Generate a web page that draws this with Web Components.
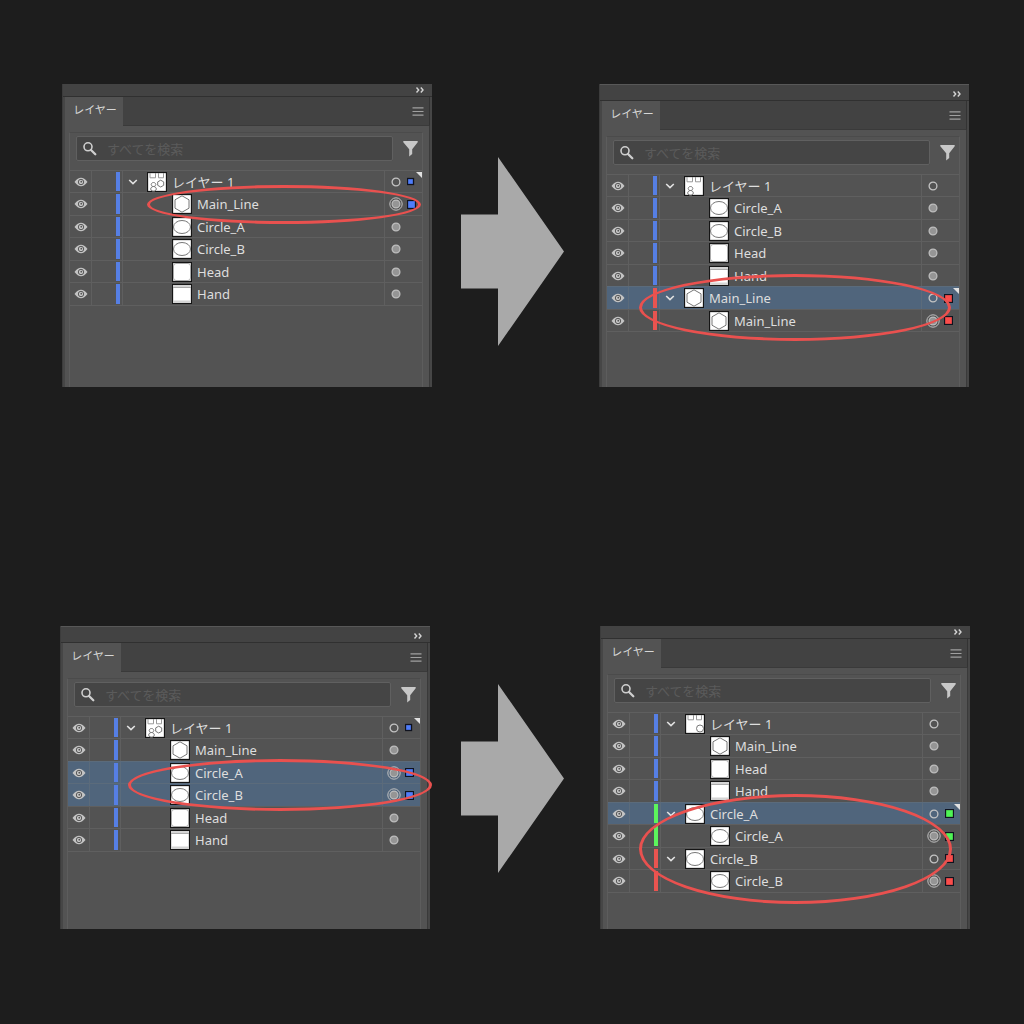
<!DOCTYPE html>
<html lang="ja">
<head>
<meta charset="utf-8">
<title>レイヤー</title>
<style>
  body {
    margin: 0;
    min-height: 100vh;
    background: #1d1d1d;
    color: #dedede;
    font: 13px/20px "Noto Sans", "Noto Sans CJK JP", sans-serif;
  }
  main {
    display: flex;
    flex-direction: column;
    gap: 239px;
    padding: 84px 0;
  }
  .move {
    --lead: 62px;
    --trail: 55px;
    --before: 29px;
    --after: 35px;
    --drop: 73px;
  }
  .copy {
    --lead: 60px;
    --trail: 54px;
    --before: 31px;
    --after: 36px;
    --drop: 58px;
  }
</style>
</head>
<body>
<main>
  <layer-step class="move">
    <layers-panel slot="from">
      <layer-row kind="layer" parts="all" level="0" mark="small" current>レイヤー 1</layer-row>
      <layer-row kind="hex" target="on" mark="large">Main_Line</layer-row>
      <layer-row kind="oval" target="art">Circle_A</layer-row>
      <layer-row kind="oval" target="art">Circle_B</layer-row>
      <layer-row kind="head" target="art">Head</layer-row>
      <layer-row kind="hand" target="art">Hand</layer-row>
      <note-ring slot="note" style="--top: 101px; --left: 84px; --right: 11px; --height: 39px"></note-ring>
    </layers-panel>
    <layers-panel slot="to" tall>
      <layer-row kind="layer" parts="figure" level="0">レイヤー 1</layer-row>
      <layer-row kind="oval" target="art">Circle_A</layer-row>
      <layer-row kind="oval" target="art">Circle_B</layer-row>
      <layer-row kind="head" target="art">Head</layer-row>
      <layer-row kind="hand" target="art">Hand</layer-row>
      <layer-row kind="hex" level="0" color="red" mark="large" selected current>Main_Line</layer-row>
      <layer-row kind="hex" color="red" target="on" mark="large">Main_Line</layer-row>
      <note-ring slot="note" style="--top: 190px; --left: 39px; --right: 18px; --height: 67px"></note-ring>
    </layers-panel>
  </layer-step>

  <layer-step class="copy">
    <layers-panel slot="from" tall>
      <layer-row kind="layer" parts="all" level="0" mark="small" current>レイヤー 1</layer-row>
      <layer-row kind="hex" target="art">Main_Line</layer-row>
      <layer-row kind="oval" target="on" mark="large" selected>Circle_A</layer-row>
      <layer-row kind="oval" target="on" mark="large" selected>Circle_B</layer-row>
      <layer-row kind="head" target="art">Head</layer-row>
      <layer-row kind="hand" target="art">Hand</layer-row>
      <note-ring slot="note" style="--top: 133px; --left: 67px; --right: -2px; --height: 52px"></note-ring>
    </layers-panel>
    <layers-panel slot="to">
      <layer-row kind="layer" parts="hex" level="0">レイヤー 1</layer-row>
      <layer-row kind="hex" target="art">Main_Line</layer-row>
      <layer-row kind="head" target="art">Head</layer-row>
      <layer-row kind="hand" target="art">Hand</layer-row>
      <layer-row kind="oval" level="0" color="green" mark="large" selected current>Circle_A</layer-row>
      <layer-row kind="oval" color="green" target="on" mark="large">Circle_A</layer-row>
      <layer-row kind="oval" level="0" color="red" mark="large">Circle_B</layer-row>
      <layer-row kind="oval" color="red" target="on" mark="large">Circle_B</layer-row>
      <note-ring slot="note" style="--top: 168px; --left: 38px; --right: 18px; --height: 110px"></note-ring>
    </layers-panel>
  </layer-step>
</main>

<template id="step-template">
  <style>
    :host {
      display: grid;
      grid-template-columns: minmax(0, 1fr) var(--before) 103px var(--after) minmax(0, 1fr);
      align-items: start;
      padding: 0 var(--trail) 0 var(--lead);
    }
    svg {
      display: block;
      width: 103px;
      margin-top: var(--drop);
    }
    .arrow { grid-column: 3; }
    .to { grid-column: 5; }
  </style>
  <slot name="from"></slot>
  <div class="arrow">
    <svg viewBox="0 0 103 189" aria-hidden="true"><path d="M37 0L103 94.500L37 189V131.500H0V57.500H37Z" fill="#a9a9a9"/></svg>
  </div>
  <div class="to"><slot name="to"></slot></div>
</template>

<template id="panel-template">
  <style>
    :host {
      display: flex;
      flex-direction: column;
      position: relative;
      box-sizing: border-box;
      min-height: 303px;
      padding: 0 2px;
      background: #464646;
      border-left: 1px solid #3c3c3c;
    }
    button {
      display: flex;
      align-items: center;
      justify-content: center;
      padding: 0;
      border: 0;
      background: none;
      color: #c4c4c4;
    }
    .strip {
      display: flex;
      justify-content: flex-end;
      align-items: flex-end;
      height: 12px;
      margin: 0 -2px;
      padding-right: 6px;
      background: #434343;
      border-bottom: 1px solid #303030;
    }
    :host([tall]) .strip {
      height: 15px;
      border-top: 1px solid #585858;
    }
    .strip button {
      width: 12px;
      height: 12px;
    }
    .tabs {
      display: flex;
      justify-content: space-between;
      height: 28px;
      background: #424242;
      border-bottom: 1px solid #3a3a3a;
      border-right: 1px solid #333;
    }
    .tab {
      width: 58px;
      height: 29px;
      background: #535353;
      color: #d6d6d6;
      font: 11px/20px "Noto Sans", "Noto Sans CJK JP", sans-serif;
      align-items: flex-start;
      padding: 3px 0 0 2px;
    }
    .menu {
      width: 22px;
    }
    .body {
      flex: 1;
      display: flex;
      flex-direction: column;
      padding: 6px 6px 0 4px;
      background: #535353;
      border-right: 1px solid #3a3a3a;
    }
    .frame {
      flex: 1;
      border: 1px solid #5d5d5d;
      border-top-color: #4b4b4b;
      border-bottom: 0;
    }
    .search {
      display: flex;
      align-items: center;
      gap: 6px;
      padding: 3px 0 9px 6px;
    }
    label {
      flex: 1;
      min-width: 0;
      display: flex;
      align-items: center;
      gap: 10px;
      height: 25px;
      box-sizing: border-box;
      padding: 0 6px;
      background: #454545;
      border: 1px solid #606060;
      border-radius: 2px;
    }
    input {
      flex: 1;
      min-width: 0;
      padding: 0;
      border: 0;
      background: none;
      outline: none;
      color: #dedede;
      font: inherit;
    }
    input::placeholder {
      color: #5b5b5b;
      opacity: 1;
    }
    .filter {
      width: 23px;
    }
    ::slotted(layer-row) {
      min-height: 23px;
    }
    ::slotted(layer-row:nth-child(odd)) {
      min-height: 22px;
    }
    .rows {
      border-bottom: 1px solid #5f5f5f;
    }
  </style>
  <div class="strip">
    <button type="button" aria-label="collapse">
      <svg width="10" height="8" viewBox="0 0 10 8" fill="none" stroke="#d4d4d4" stroke-width="1.400"><path d="M1.500 1.500L3.700 4L1.500 6.500M5.800 1.500L8 4L5.800 6.500"/></svg>
    </button>
  </div>
  <div class="tabs">
    <button type="button" class="tab">レイヤー</button>
    <button type="button" class="menu" aria-label="menu">
      <svg width="12" height="9" viewBox="0 0 12 9" stroke="#a0a0a0" stroke-width="1.200"><path d="M0.500 0.800H11.500M0.500 4.500H11.500M0.500 8.200H11.500"/></svg>
    </button>
  </div>
  <div class="body">
    <div class="frame">
      <div class="search">
        <label>
          <svg width="14" height="14" viewBox="0 0 14 14" fill="none" stroke="#cfcfcf"><circle cx="5" cy="4.800" r="4" stroke-width="1.600"/><path d="M8 8L12.300 12.200" stroke-width="2.300" stroke-linecap="round"/></svg>
          <input type="text" placeholder="すべてを検索" aria-label="すべてを検索">
        </label>
        <button type="button" class="filter" aria-label="filter">
          <svg width="15" height="17" viewBox="0 0 15 17" fill="#c8c8c8"><path d="M0.300 1H14.700V2.200L9.200 9.200V14L6.200 16.500V9.200L0.300 2.200Z"/></svg>
        </button>
      </div>
      <div class="rows"><slot></slot></div>
    </div>
  </div>
  <slot name="note"></slot>
</template>

<template id="row-template">
  <style>
    :host {
      --bar: #567fe4;
      --chip: #4f7dfa;
      --line: #5f5f5f;
      display: grid;
      grid-template-columns: 22px 23px 8px minmax(0, 1fr) 38px;
      position: relative;
      box-sizing: border-box;
      border-top: 1px solid var(--line);
    }
    :host([color="red"]) {
      --bar: #e95450;
      --chip: #fb4d4b;
    }
    :host([color="green"]) {
      --bar: #5cf45c;
      --chip: #4ff555;
    }
    :host([selected]) {
      --line: #5b6b7b;
      background: #50657c;
    }
    button {
      display: flex;
      align-items: center;
      justify-content: center;
      padding: 0;
      border: 0;
      background: none;
    }
    svg {
      display: block;
    }
    .eye, .swatch {
      border-right: 1px solid var(--line);
    }
    .swatch {
      padding: 1px 2px 1px 1px;
    }
    .swatch i {
      display: block;
      width: 4px;
      height: 100%;
      background: var(--bar);
    }
    .item {
      display: flex;
      align-items: center;
      min-width: 0;
      padding-left: 27px;
    }
    :host([level="0"]) .item {
      padding-left: 0;
    }
    .item .name {
      height: 20px;
      margin-left: 5px;
      white-space: nowrap;
    }
    .lead {
      flex: none;
      width: 22px;
      height: 20px;
    }
    :host([level="0"]) .lead {
      margin-right: 2px;
    }
    .lead button {
      width: 20px;
      height: 20px;
    }
    .end {
      display: flex;
      align-items: center;
      border-left: 1px solid var(--line);
    }
    .target {
      width: 22px;
      height: 18px;
    }
    .corner {
      position: absolute;
      top: 1px;
      right: 0;
      border-top: 6px solid #e0e0e0;
      border-left: 6px solid transparent;
    }
  </style>
  <button type="button" class="eye" aria-label="visible">
    <svg width="14" height="10" viewBox="0 0 14 10"><path d="M0.500 5Q7 -3.400 13.500 5Q7 13.400 0.500 5Z" fill="#c4c4c4"/><circle cx="7" cy="5" r="2.700" fill="none" stroke="#585858"/><circle cx="7.300" cy="4.700" r="0.900" fill="#555"/></svg>
  </button>
  <span></span>
  <span class="swatch"><i></i></span>
  <div class="item">
    <span class="lead"></span>
    <span class="thumb"></span>
    <span class="name"><slot></slot></span>
  </div>
  <div class="end">
    <button type="button" class="target" aria-label="target"></button>
    <span class="chip"></span>
  </div>
</template>

<script>
const thumbs = {
  hex: '<path d="M10 1.800L17 5.800V14.200L10 18.200L3 14.200V5.800Z" fill="none" stroke="#777"/>',
  oval: '<ellipse cx="10" cy="10" rx="8.500" ry="6.500" fill="none" stroke="#777"/>',
  head: '<rect x="1.500" y="1.500" width="17" height="17" rx="2.500" fill="#fff" stroke="#aaa"/>',
  hand: '<path d="M1 1H19V3.500H1ZM1 16.500H19V19H1Z" fill="#d4d4d4"/><path d="M1 3.500H19" stroke="#aaa"/>'
};

// pieces shown in the thumbnail of the top layer
const boxes = '<path d="M3 1V5.800H8.500V1M11.500 1V5.800H16.500V1" fill="none" stroke="#999"/>';
const figure = '<path d="M6.500 10.500a2.300 2 0 1 0 .01 0M6.500 14.500a2.800 2.400 0 1 0 .01 0" fill="none" stroke="#777"/>';
const hex = '<path d="M13.700 8.200L16.700 9.900V13.300L13.700 15L10.700 13.300V9.900Z" fill="none" stroke="#777"/>';
const parts = {
  all: boxes + figure + hex,
  figure: boxes + figure,
  hex: boxes + '<circle cx="15" cy="14.500" r="3.500" fill="none" stroke="#777"/>'
};

const targets = {
  layer: '<circle cx="7" cy="7" r="3.900" fill="none" stroke="#c4c4c4" stroke-width="1.300"/>',
  art: '<circle cx="7" cy="7" r="3.900" fill="#959595" stroke="#bcbcbc" stroke-width="1.300"/>',
  on: '<circle cx="7" cy="7" r="3.900" fill="#959595" stroke="#bcbcbc" stroke-width="1.200"/><circle cx="7" cy="7" r="6.200" fill="none" stroke="#c0c0c0"/>'
};

const clone = (id) => document.getElementById(id).content.cloneNode(true);

/**
 * @class LayerStep
 */
class LayerStep extends HTMLElement {
  constructor () {
    super();
    this._shadowRoot = this.attachShadow({mode: 'open'});
    this._shadowRoot.appendChild(clone('step-template'));
  }
}

/**
 * @class LayersPanel
 */
class LayersPanel extends HTMLElement {
  constructor () {
    super();
    this._shadowRoot = this.attachShadow({mode: 'open'});
    this._shadowRoot.appendChild(clone('panel-template'));
  }
}

/**
 * @class LayerRow
 */
class LayerRow extends HTMLElement {
  constructor () {
    super();
    this._shadowRoot = this.attachShadow({mode: 'open'});
    this._shadowRoot.appendChild(clone('row-template'));
    this.$lead = this._shadowRoot.querySelector('.lead');
    this.$thumb = this._shadowRoot.querySelector('.thumb');
    this.$target = this._shadowRoot.querySelector('.target');
    this.$chip = this._shadowRoot.querySelector('.chip');
  }
  /**
   * @function connectedCallback
   * @returns {void}
   */
  connectedCallback () {
    const kind = this.getAttribute('kind');
    const art = kind === 'layer' ? parts[this.getAttribute('parts')] : thumbs[kind];
    this.$thumb.innerHTML = `<svg width="20" height="20" viewBox="0 0 20 20">
      <rect x="0.500" y="0.500" width="19" height="19" fill="#fff" stroke="#151515" stroke-width="1.300"/>${art}</svg>`;

    // only top level layers can be folded
    if (this.getAttribute('level') === '0') {
      this.$lead.innerHTML = `<button type="button" aria-label="expand">
        <svg width="10" height="6" viewBox="0 0 10 6" fill="none" stroke="#e2e2e2" stroke-width="1.600"><path d="M1.200 1L5 4.600L8.800 1"/></svg>
      </button>`;
    }

    const target = targets[this.getAttribute('target') || 'layer'];
    this.$target.innerHTML = `<svg width="14" height="14" viewBox="0 0 14 14">${target}</svg>`;

    const mark = this.getAttribute('mark');
    if (mark) {
      const size = mark === 'small' ? 6 : 8;
      const inset = mark === 'small' ? 1.5 : 0.5;
      this.$chip.innerHTML = `<svg width="9" height="9" viewBox="0 0 9 9">
        <rect x="0.500" y="${inset}" width="${size}" height="${size}" fill="var(--chip)" stroke="#10131f" stroke-width="1.300"/></svg>`;
    }
    if (this.hasAttribute('current')) {
      const corner = document.createElement('span');
      corner.className = 'corner';
      this._shadowRoot.append(corner);
    }
  }
}

/**
 * @class NoteRing
 */
class NoteRing extends HTMLElement {
  constructor () {
    super();
    this._shadowRoot = this.attachShadow({mode: 'open'});
    this._shadowRoot.innerHTML = `
      <style>
        :host {
          position: absolute;
          top: var(--top);
          left: var(--left);
          right: var(--right);
          height: var(--height);
          box-sizing: border-box;
          border: 3px solid #e9514f;
          border-radius: 50%;
          pointer-events: none;
        }
      </style>`;
  }
}

// Register
customElements.define('layer-step', LayerStep);
customElements.define('layers-panel', LayersPanel);
customElements.define('layer-row', LayerRow);
customElements.define('note-ring', NoteRing);
</script>
</body>
</html>
